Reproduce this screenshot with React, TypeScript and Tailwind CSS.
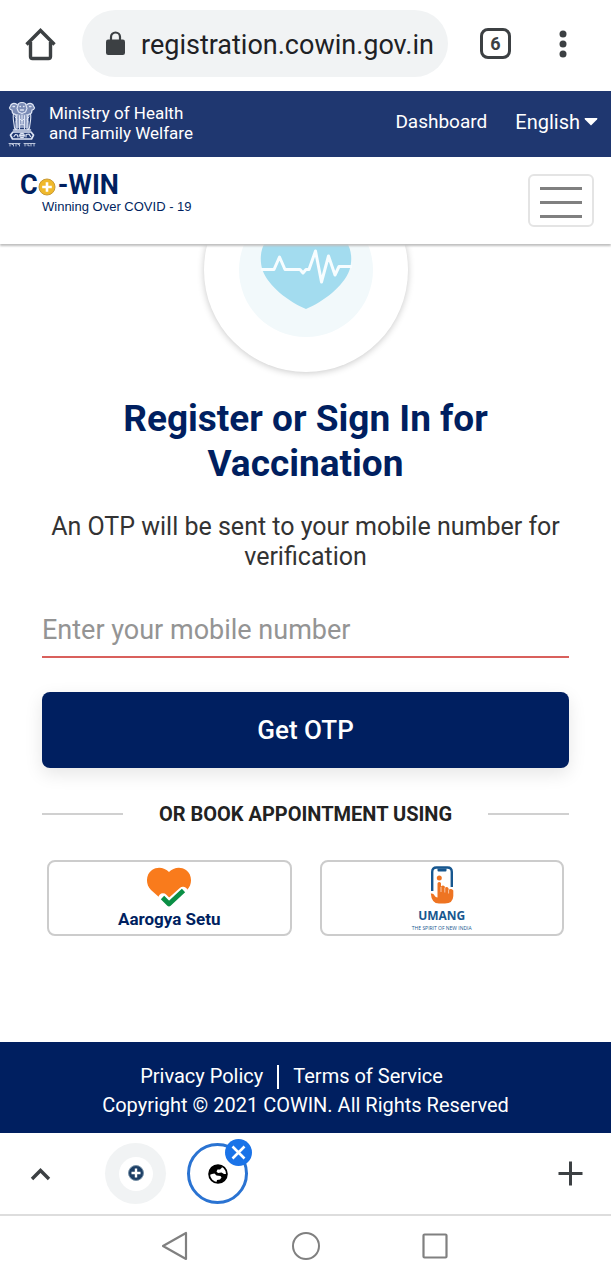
import React from "react";

function EmblemIcon() {
  return (
    <svg width="28" height="46" viewBox="0 0 28 46" fill="none" aria-hidden="true">
      <path d="M5 11Q8 14 7 27H21Q20 14 23 11L18 13H10Z" fill="#8d9cc0" />
      <path d="M9 3L4 2.500L2 7L5 12L10 13H18L23 12L26 7L24 2.500L19 3L14 1Z" fill="#7b8cb6" />
      <g stroke="#dfe6f5" strokeLinecap="round" strokeLinejoin="round">
        <path d="M10 4.500c0-2 1.500-3 4-3s4 1 4 3l1 3-1.500 3.500-3.500 1.500-3.500-1.500L9 7.500z" strokeWidth="1.100" />
        <path d="M9 3.500C6 1.500 3 2.500 2.500 5L1.500 7l1 1.500L4 9l.5 3L8 14M19 3.500c3-2 6-1 6.500 1.500l1 2-1 1.500L24 9l-.5 3-3.500 2" strokeWidth="1.300" />
        <path d="M5 5.500h1.500M21.500 5.500H23M12 5.500h.5M15.500 5.500h.5M12.500 9h3" strokeWidth="1.300" />
        <path d="M5.500 13c-1 4 .5 8 1 14M22.500 13c1 4-.5 8-1 14M9 13.500c-1 4 0 9 0 14M19 13.500c1 4 0 9 0 14M11.500 14.500v13.500M16.500 14.500v13.500M14 14v8" strokeWidth="1.100" />
        <path d="M7 16l2 2-1 3M21 16l-2 2 1 3M12 18l2 2 2-2M12 24l2-1 2 1" strokeWidth="1" />
        <path d="M5.500 29h17M7 27.500l2 1.500M21 27.500L19 29" strokeWidth="1.500" />
        <path d="M5 31h18l2.500 3-2 4h-19l-2-4z" strokeWidth="1.700" />
        <circle cx="14" cy="34.500" r="2.200" strokeWidth="1.200" />
        <path d="M6 35.500l1.500-2 2 .5.500 2M18 36v-2.500l3-.5 1.500 2.500M14 32.500v4M12 34.500h4" strokeWidth="1.200" />
        <path d="M1 42.500h11M16 42.500h11" strokeWidth=".8" />
        <path d="M2 43v2M4 43.500h1.500V45M8 43v2M10 43.500h1.500V45M17 43v2M19 44h2v1M23 43v2M26 43v2" strokeWidth=".8" />
      </g>
    </svg>
  );
}

function HeartPulse() {
  return (
    <svg viewBox="0 0 204 204" className="h-full w-full" aria-hidden="true">
      <circle cx="102" cy="102" r="67" fill="#f2f9fb" />
      <path
        d="M102 141C85 134 64 118 58.500 102C54 88 58 70 73 65C85 61 96 66 102 75C108 66 119 61 131 65C146 70 150 88 145.500 102C140 118 119 134 102 141Z"
        fill="#a3dcef"
      />
      <path
        d="M57 101.500H70L75.500 89L81 101.500H96L99 105L102 101.500H105L111.500 83L117.500 114L124.500 88L131 107L135 98.500H148"
        fill="none"
        stroke="#f7fdff"
        strokeWidth="3"
        strokeLinejoin="round"
      />
    </svg>
  );
}

function BrowserBar() {
  return (
    <div className="flex h-[91px] items-center bg-white pr-11 pl-6 pb-1">
      <button aria-label="Home" className="shrink-0">
        <svg width="34" height="34" viewBox="0 0 34 34" fill="none" stroke="#3c4043" strokeWidth="3.400">
          <path d="M2.500 17.500L16.500 3.500L30.500 17.500" strokeLinejoin="miter" />
          <path d="M6.500 15V29.500Q6.500 31.500 8.500 31.500H24.500Q26.500 31.500 26.500 29.500V15" />
        </svg>
      </button>
      <div className="ml-6 flex h-[67px] min-w-0 flex-1 items-center rounded-full bg-[#f1f3f4] pr-3 pl-6">
        <svg width="19" height="26" viewBox="0 0 19 26" className="shrink-0" aria-hidden="true">
          <path d="M5 10V6a4.500 4.500 0 0 1 9 0V10" fill="none" stroke="#3c4043" strokeWidth="2.200" />
          <rect x="0" y="8.500" width="19" height="15.500" rx="2.200" fill="#3c4043" />
        </svg>
        <span className="ml-4 overflow-hidden pt-[2px] font-[Roboto,sans-serif] text-[27px] leading-9 whitespace-nowrap text-[#202124]">
          registration.cowin.gov.in
        </span>
      </div>
      <button
        aria-label="Open tabs"
        className="ml-8 flex size-[31px] shrink-0 items-center justify-center rounded-lg border-3 border-[#3c4043] font-[Roboto,sans-serif] text-lg leading-none font-bold text-[#3c4043]"
      >
        6
      </button>
      <button aria-label="More options" className="ml-12 shrink-0">
        <svg width="8" height="28" viewBox="0 0 8 28" fill="#3c4043">
          <circle cx="4" cy="4" r="3.500" />
          <circle cx="4" cy="14" r="3.500" />
          <circle cx="4" cy="24" r="3.500" />
        </svg>
      </button>
    </div>
  );
}

function MinistryBar() {
  return (
    <div className="flex h-[66px] items-center bg-[#1f3770] pr-[13px] pl-2 text-white">
      <EmblemIcon />
      <p className="ml-[13px] pb-[2px] text-[17px] leading-5">
        Ministry of Health
        <br />
        and Family Welfare
      </p>
      <nav className="ml-auto flex items-center gap-7 pb-1">
        <a href="#dashboard" className="text-[19px] leading-6">
          Dashboard
        </a>
        <button className="flex items-center gap-1 text-xl leading-6">
          English
          <svg width="14" height="8" viewBox="0 0 14 8" fill="currentColor" aria-hidden="true">
            <path d="M1 0H13Q14 .5 13 1.500L7 7.500L1 1.500Q0 .5 1 0Z" />
          </svg>
        </button>
      </nav>
    </div>
  );
}

function SiteHeader() {
  return (
    <header className="relative z-10 flex h-[87px] items-center justify-between bg-white pr-[17px] pl-5 shadow-[0_2px_2px_#bfbfbf]">
      <a href="#home" className="-mt-4 block text-[#001f60]">
        <span className="flex items-center text-[27px] leading-7 font-bold">
          C
          <svg width="18" height="18" viewBox="0 0 18 18" className="mt-1" role="img" aria-label="o">
            <circle cx="9" cy="9" r="8" fill="#f0b92b" stroke="#c99a35" />
            <path d="M9 4.200V13.800M4.200 9H13.800" stroke="#fff" strokeWidth="2.600" />
          </svg>
          <span className="ml-[2px]">-WIN</span>
        </span>
        <span className="ml-[22px] block font-['Liberation_Sans',sans-serif] text-[13px] leading-4">
          Winning Over COVID - 19
        </span>
      </a>
      <button
        aria-label="Menu"
        className="flex h-[53px] w-[66px] flex-col items-center justify-center gap-[11px] rounded-md border-2 border-[#e4e4e4] pt-1"
      >
        <span className="h-[3px] w-[42px] bg-[#808080]" />
        <span className="h-[3px] w-[42px] bg-[#808080]" />
        <span className="h-[3px] w-[42px] bg-[#808080]" />
      </button>
    </header>
  );
}

function AarogyaIcon() {
  return (
    <svg width="46" height="42" viewBox="0 0 46 42" aria-hidden="true">
      <path
        d="M23 39L5 23C-1 17 0 7 6 3C12-1 19 1 23 5C27 1 34-1 40 3C46 7 47 17 41 23Z"
        fill="#f97b1c"
      />
      <path d="M17 31L23 37L37 24L46 24V42H15Z" fill="#fff" />
      <path d="M17 31L23 37L37 24.500" fill="none" stroke="#fff" strokeWidth="9.500" strokeLinecap="round" strokeLinejoin="round" />
      <path d="M16.500 30.500L23 37L37.500 23.500" fill="none" stroke="#0a8f45" strokeWidth="4.800" strokeLinejoin="round" />
    </svg>
  );
}

function UmangIcon() {
  return (
    <svg width="24" height="38" viewBox="0 0 24 38" fill="none" aria-hidden="true">
      <path d="M2.200 25V6Q2.200 1.500 6.500 1.500H17.500Q21.800 1.500 21.800 6V21" stroke="#17578f" strokeWidth="2.400" />
      <path d="M7.500 2.500H16.500V4.500Q16.500 5.500 15.500 5.500H8.500Q7.500 5.500 7.500 4.500Z" fill="#17578f" />
      <circle cx="9.300" cy="12" r="2.500" fill="#ee7422" />
      <path
        d="M7.500 17.500Q7.500 16 9.200 16Q11 16 11 17.500V20.500Q13 18.500 14.800 20.500V22Q17 20 18.600 22.500V24Q21 22 23.300 24.500V30Q23 37.500 15 37.500H9Q1.500 37.500 .8 27.500Q3.500 27 4.500 29.500Q5.500 31.500 7.500 31.500Z"
        fill="#ee7422"
      />
      <path d="M11 21V26M14.800 22V26.500M18.600 24V27.500" stroke="#fff" strokeWidth=".6" />
    </svg>
  );
}

function SignIn() {
  return (
    <main className="flex-1 px-[42px]">
      <div className="mx-auto -mt-19 size-[204px] rounded-full bg-white shadow-[0_1px_7px_rgba(0,0,0,0.22)]">
        <HeartPulse />
      </div>
      <h1 className="mt-6 text-center text-[37px] leading-[45px] font-bold text-[#001f60]">
        Register or Sign In for Vaccination
      </h1>
      <p className="-mx-2 mt-[26px] text-center text-[25px] leading-[30px] text-[#333333]">
        An OTP will be sent to your mobile number for verification
      </p>
      <form onSubmit={(event) => event.preventDefault()}>
        <input
          type="tel"
          aria-label="Mobile number"
          placeholder="Enter your mobile number"
          className="mt-8 block h-[54px] w-full rounded-none border-b-2 border-[#d9605c] text-[27px] text-[#333333] outline-none placeholder:text-[#949494]"
        />
        <button
          type="submit"
          className="mt-[34px] block h-19 w-full rounded-lg bg-[#001f60] text-[26px] font-medium text-white shadow-[0_6px_18px_rgba(0,0,0,0.1)]"
        >
          Get OTP
        </button>
      </form>
      <div className="mt-8 flex items-center">
        <span className="h-[2px] flex-1 bg-[#d0d0d0]" />
        <h2 className="px-9 text-xl leading-7 font-bold text-[#222222]">OR BOOK APPOINTMENT USING</h2>
        <span className="h-[2px] flex-1 bg-[#d0d0d0]" />
      </div>
      <div className="mx-[5px] mt-8 grid grid-cols-2 gap-7">
        <a href="#aarogya-setu" className="flex h-19 flex-col items-center rounded-lg border-2 border-[#cccccc] pt-[5px]">
          <AarogyaIcon />
          <span className="text-[17px] leading-5 font-bold text-[#001f60]">Aarogya Setu</span>
        </a>
        <a href="#umang" className="flex h-19 flex-col items-center rounded-lg border-2 border-[#cccccc] pt-1">
          <UmangIcon />
          <span className="mt-1 font-['Open_Sans',sans-serif] text-xs leading-4 font-bold text-[#17578f]">UMANG</span>
          <span className="font-['Open_Sans',sans-serif] text-[5px] leading-2 text-[#17578f]">THE SPIRIT OF NEW INDIA</span>
        </a>
      </div>
    </main>
  );
}

function SiteFooter() {
  return (
    <footer className="bg-[#001f60] pt-5 pb-[13px] text-center text-xl leading-[29px] text-white">
      <div className="flex items-center justify-center pr-7">
        <a href="#privacy">Privacy Policy</a>
        <span className="mx-[14px] h-6 w-[2px] bg-white" />
        <a href="#terms">Terms of Service</a>
      </div>
      <p>Copyright © 2021 COWIN. All Rights Reserved</p>
    </footer>
  );
}

function TabStrip() {
  return (
    <div className="flex h-[83px] items-center border-b-2 border-[#dddddd] bg-white pr-7 pl-[30px]">
      <button aria-label="Show tabs">
        <svg width="21" height="14" viewBox="0 0 21 14" fill="none" stroke="#3c4043" strokeWidth="3.400">
          <path d="M2 12L10.500 3.500L19 12" />
        </svg>
      </button>
      <button aria-label="CoWIN tab" className="ml-[54px] flex size-[61px] items-center justify-center rounded-full bg-[#f1f3f4]">
        <svg width="34" height="34" viewBox="0 0 34 34">
          <circle cx="17" cy="17" r="17" fill="#fff" />
          <circle cx="17" cy="16" r="7.500" fill="#1d3f66" stroke="#7a93a8" strokeWidth="1" />
          <path d="M17 11.500V20.500M12.500 16H21.500" stroke="#fff" strokeWidth="2.400" />
        </svg>
      </button>
      <div className="relative ml-[21px]">
        <button
          aria-label="Current tab"
          className="flex size-[61px] items-center justify-center rounded-full border-3 border-[#2a73d2]"
        >
          <svg width="20" height="20" viewBox="0 0 20 20">
            <circle cx="10" cy="10" r="8.900" fill="#fff" stroke="#000" strokeWidth="1.800" />
            <path d="M1.500 11L1.500 6.500L5 2.500L9 1L13.500 2L14 3.500L12 5.500H9.500L8.500 7.500L10 9L13.500 8.500L16 10L18.800 10L18 14L15 17.500L11.500 19L8.500 18.500L9 16L12 15.500L13.500 13.500L12.500 12L8.500 11.500L6.500 9.500L4 10Z" fill="#000" />
          </svg>
        </button>
        <button
          aria-label="Close tab"
          className="absolute -top-1 -right-1 flex size-[27px] items-center justify-center rounded-full bg-[#1a73e8]"
        >
          <svg width="15" height="15" viewBox="0 0 15 15" stroke="#fff" strokeWidth="2.600">
            <path d="M1.500 1.500L13.500 13.500M13.500 1.500L1.500 13.500" />
          </svg>
        </button>
      </div>
      <button aria-label="New tab" className="ml-auto">
        <svg width="25" height="25" viewBox="0 0 25 25" stroke="#3c4043" strokeWidth="3">
          <path d="M12.500 .5V24.500M.5 12.500H24.500" />
        </svg>
      </button>
    </div>
  );
}

function SystemBar() {
  return (
    <div className="flex h-16 items-center justify-center gap-[102px] bg-white pb-1">
      <button aria-label="Back">
        <svg width="28" height="30" viewBox="0 0 28 30" fill="none" stroke="#808080" strokeWidth="2.200" strokeLinejoin="round">
          <path d="M1 15L24 2V28Z" />
        </svg>
      </button>
      <button aria-label="Home screen">
        <svg width="28" height="28" viewBox="0 0 28 28" fill="none" stroke="#808080" strokeWidth="2">
          <circle cx="14" cy="14" r="13" />
        </svg>
      </button>
      <button aria-label="Recent apps">
        <svg width="28" height="28" viewBox="0 0 28 28" fill="none" stroke="#808080" strokeWidth="2.200">
          <rect x="1.500" y="2.500" width="23" height="23" rx="1" />
        </svg>
      </button>
    </div>
  );
}

export default function App() {
  return (
    <div className="flex min-h-screen flex-col bg-white font-[Roboto,sans-serif]">
      <BrowserBar />
      <MinistryBar />
      <SiteHeader />
      <SignIn />
      <SiteFooter />
      <TabStrip />
      <SystemBar />
    </div>
  );
}
